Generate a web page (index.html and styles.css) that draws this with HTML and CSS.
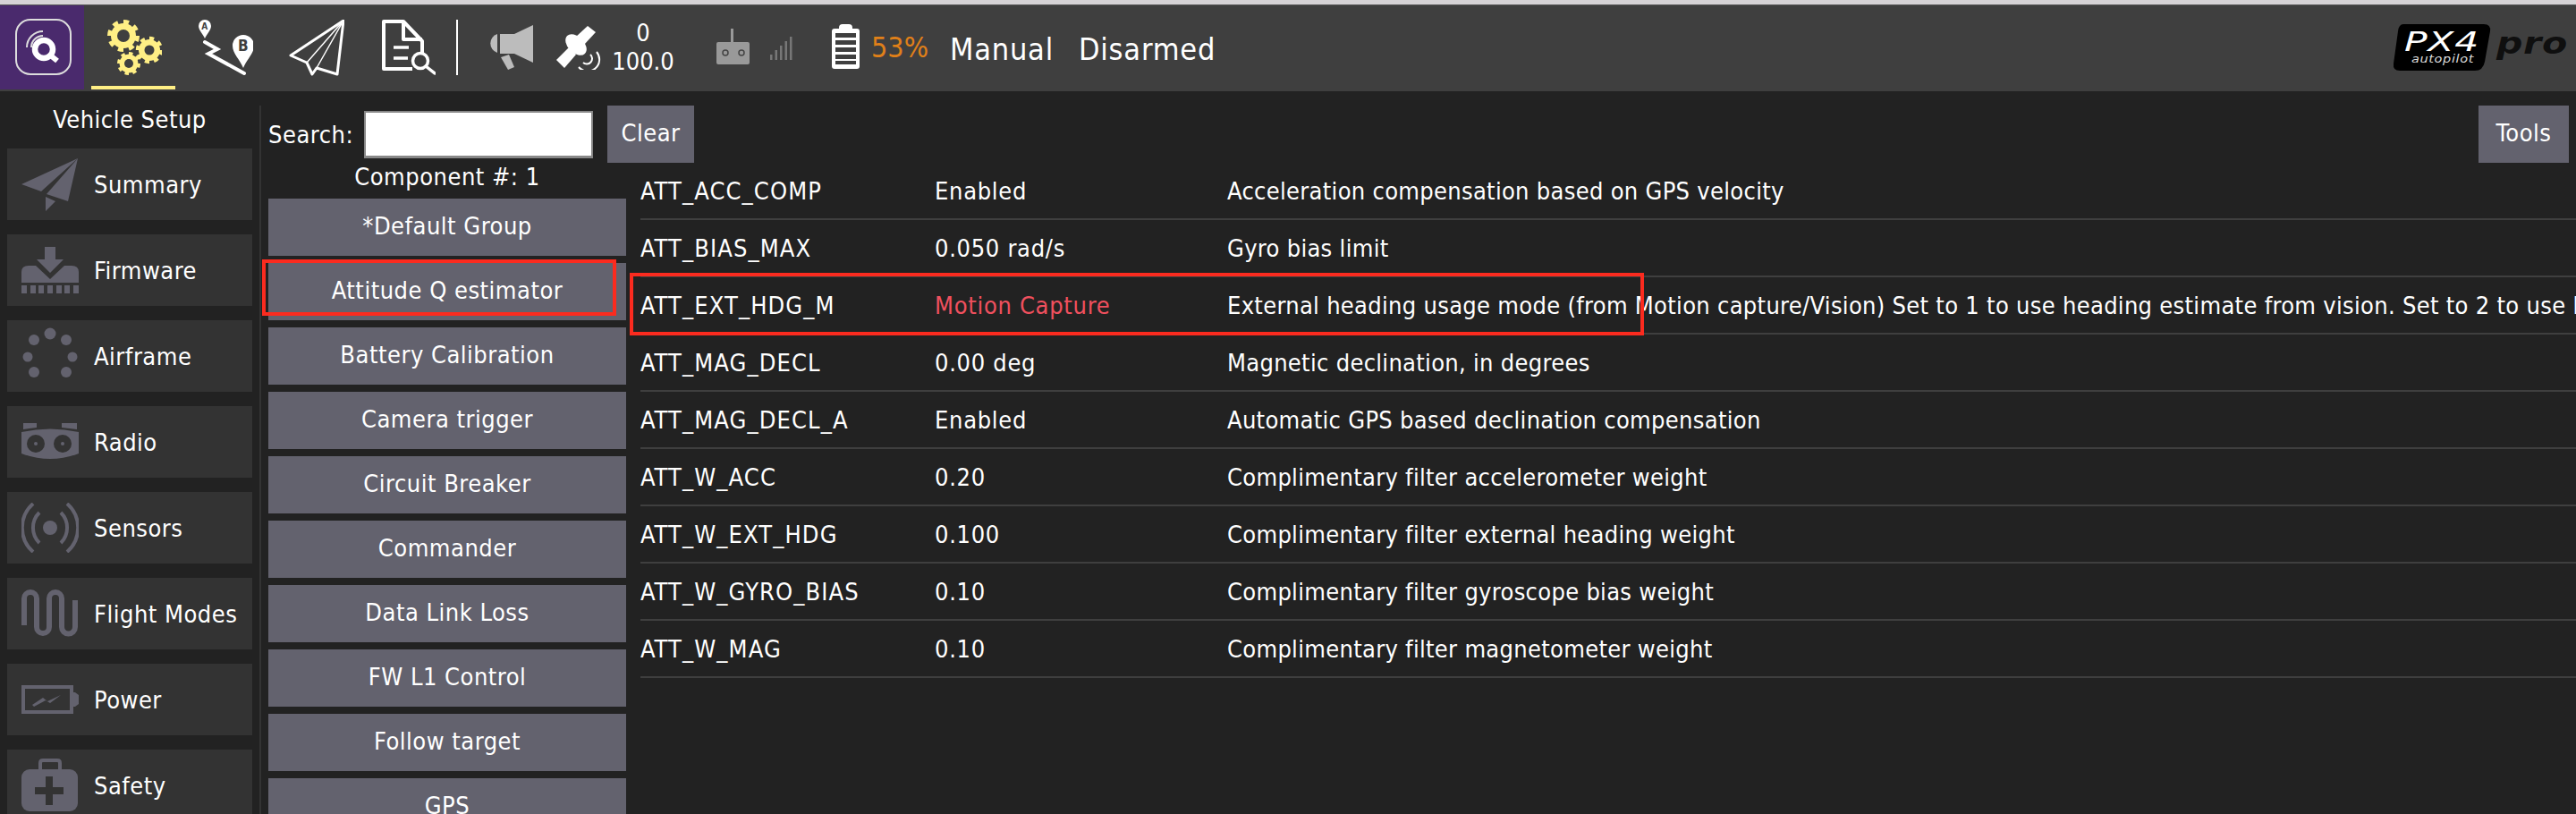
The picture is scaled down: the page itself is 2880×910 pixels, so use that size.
FILE: index.html
```html
<!DOCTYPE html>
<html lang="en">
<head>
    <meta charset="UTF-8">
    <title>QGroundControl</title>
    <link rel="stylesheet" href="styles.css">
</head>
<body>
    <div class="top-strip"></div>
    <div class="toolbar">
        <div class="logo-q">
            <svg width="64" height="64" viewBox="0 0 64 64">
                <rect x="1" y="1" width="61" height="61" rx="16" fill="none" stroke="#ddd" stroke-width="2"/>
                <circle cx="32" cy="34" r="10" fill="none" stroke="#fff" stroke-width="6.5"/>
                <path d="M37 39 L47 47" stroke="#fff" stroke-width="6" fill="none"/>
                <path d="M13 32 A18 18 0 0 1 31 14 M18 32 A13 13 0 0 1 31 19" stroke="#ddd" stroke-width="2" fill="none"/>
            </svg>
        </div>
        <div class="tool tool-active">
            <svg width="64" height="64" viewBox="0 0 64 64">
                <g fill="#ffef85">
                    <circle cx="21" cy="18" r="14"/>
                    <circle cx="50" cy="34" r="12"/>
                    <circle cx="27" cy="49" r="10.5"/>
                </g>
                <g fill="none" stroke="#ffef85">
                    <circle cx="21" cy="18" r="15.5" stroke-width="5" pathLength="16" stroke-dasharray="1 1"/>
                    <circle cx="50" cy="34" r="13" stroke-width="4.5" pathLength="16" stroke-dasharray="1 1"/>
                    <circle cx="27" cy="49" r="11" stroke-width="4" pathLength="16" stroke-dasharray="1 1"/>
                </g>
                <g fill="#3f3f3f">
                    <circle cx="21" cy="18" r="7"/>
                    <circle cx="50" cy="34" r="5.5"/>
                    <circle cx="27" cy="49" r="5"/>
                </g>
            </svg>
        </div>
        <div class="tool">
            <svg width="64" height="64" viewBox="0 0 64 64">
                <path d="M10 0 a7 7 0 0 1 7 7 c0 5 -5 9 -7 14 c-2 -5 -7 -9 -7 -14 a7 7 0 0 1 7 -7z" fill="#fff"/>
                <text x="10" y="11" class="pin-a">A</text>
                <path d="M53 17 a12 12 0 0 1 12 12 c0 9 -8 15 -12 25 c-4 -10 -12 -16 -12 -25 a12 12 0 0 1 12 -12z" fill="#fff"/>
                <text x="53" y="35" class="pin-b">B</text>
                <path d="M10 25 L24 33 L14 38 L54 60" fill="none" stroke="#fff" stroke-width="4" stroke-linecap="round"/>
            </svg>
        </div>
        <div class="tool">
            <svg width="64" height="64" viewBox="0 0 64 64">
                <path d="M63 1 L4 40 L22 48 L28 61 L33 54 L56 61 Z" fill="none" stroke="#fff" stroke-width="3" stroke-linejoin="round"/>
                <path d="M63 1 L22 48 M63 1 L33 54" fill="none" stroke="#fff" stroke-width="1.5"/>
            </svg>
        </div>
        <div class="tool">
            <svg width="64" height="64" viewBox="0 0 64 64">
                <path d="M38 55 H6 V2 H28 L49 24 V37 M28 2 V22 H49" fill="none" stroke="#fff" stroke-width="4" stroke-linejoin="round"/>
                <path d="M17 31 H34 M17 43 H33" fill="none" stroke="#fff" stroke-width="3.5"/>
                <circle cx="47" cy="46" r="8.5" fill="none" stroke="#fff" stroke-width="3.5"/>
                <path d="M53 52 L63 60" stroke="#fff" stroke-width="3.5" stroke-linecap="round"/>
            </svg>
        </div>
        <div class="tool-divider"></div>
        <svg class="ic-horn" width="52" height="50" viewBox="0 0 52 50" fill="#bcbcbc">
            <path d="M12 10 a11 11 0 0 0 0 21 z"/>
            <path d="M15 10 H31 L52 0 V42 L31 32 H15z"/>
            <path d="M16 36 L25 33 L31 47 L24 50z"/>
        </svg>
        <svg class="ic-sat" width="50" height="50" viewBox="0 0 50 50">
            <g fill="#fff">
                <path d="M35 1 L44 8 L31 22 L22 13z"/>
                <path d="M0 39 L14 25 L22 33 L9 48z"/>
                <ellipse cx="22" cy="22" rx="14" ry="9" transform="rotate(45 22 22)"/>
            </g>
            <path d="M45 30 a12 12 0 1 1 -20 17 M38 33 a6 6 0 1 1 -8 9" fill="none" stroke="#fff" stroke-width="2"/>
        </svg>
        <div class="sat-count">
            <div>0</div>
            <div>100.0</div>
        </div>
        <svg class="ic-rc" width="37" height="40" viewBox="0 0 37 40">
            <rect x="16" y="0" width="3" height="16" fill="#999"/>
            <rect x="0" y="15" width="37" height="25" rx="2" fill="#999"/>
            <circle cx="10" cy="27" r="3" fill="none" stroke="#444" stroke-width="1.5"/>
            <circle cx="28" cy="27" r="3" fill="none" stroke="#444" stroke-width="1.5"/>
        </svg>
        <svg class="ic-signal" width="25" height="26" viewBox="0 0 25 26" fill="#777">
            <rect x="0" y="20" width="2.5" height="6"/>
            <rect x="5.5" y="15" width="2.5" height="11"/>
            <rect x="11" y="10" width="2.5" height="16"/>
            <rect x="16.5" y="5" width="2.5" height="21"/>
            <rect x="22" y="0" width="2.5" height="26"/>
        </svg>
        <svg class="ic-batt" width="31" height="50" viewBox="0 0 31 50">
            <path d="M8 4 Q8 0 12 0 H19 Q23 0 23 4 V6 H8z" fill="#fff"/>
            <rect x="0" y="5" width="31" height="45" rx="3" fill="#fff"/>
            <g fill="#3f3f3f">
                <rect x="4" y="10" width="23" height="5"/>
                <rect x="4" y="18" width="23" height="5"/>
                <rect x="4" y="26" width="23" height="5"/>
                <rect x="4" y="34" width="23" height="5"/>
                <rect x="4" y="41" width="23" height="4"/>
            </g>
        </svg>
        <span class="batt-pct">53%</span>
        <span class="status status-mode">Manual</span>
        <span class="status status-arm">Disarmed</span>
        <div class="brand">
            <svg width="197" height="52" viewBox="0 0 197 52">
                <path d="M12 0 H102 Q110 0 109 8 L103 42 Q101 52 92 52 H8 Q0 52 1 44 L6 8 Q7 0 12 0z" fill="#000"/>
                <text x="55" y="30" class="px4-mark" textLength="84" lengthAdjust="spacingAndGlyphs">PX4</text>
                <text x="56" y="43" class="px4-sub" textLength="70" lengthAdjust="spacingAndGlyphs">autopilot</text>
                <text x="116" y="33" class="px4-pro" textLength="80" lengthAdjust="spacingAndGlyphs">pro</text>
            </svg>
        </div>
    </div>

    <div class="page">
        <div class="sidebar">
            <div class="sidebar-title">Vehicle Setup</div>
            <div class="side-btn">
                <svg class="side-icon" width="64" height="60" viewBox="0 0 64 60">
                    <path d="M63 1 L0 30 L22 38z M63 1 L28 41 L52 49z M27 44 L38 49 L27 60z"/>
                </svg>
                Summary
            </div>
            <div class="side-btn">
                <svg class="side-icon" width="64" height="52" viewBox="0 0 64 52">
                    <path d="M0 40 V28 Q0 21 8 21 H16 L32 36 L48 21 H56 Q64 21 64 28 V40z"/>
                    <path d="M26 0 H38 V14 H47 L32 29 L17 14 H26z"/>
                    <path d="M0 43h6v9h-6z M10 43h6v9h-6z M19 43h6v9h-6z M29 43h6v9h-6z M39 43h6v9h-6z M48 43h6v9h-6z M58 43h6v9h-6z"/>
                </svg>
                Firmware
            </div>
            <div class="side-btn">
                <svg class="side-icon" width="64" height="64" viewBox="0 0 64 64">
                    <circle cx="32" cy="7" r="6.5"/>
                    <circle cx="14" cy="14" r="6"/>
                    <circle cx="50" cy="14" r="6"/>
                    <circle cx="7" cy="33" r="5.5"/>
                    <circle cx="57" cy="33" r="5.5"/>
                    <circle cx="14" cy="50" r="6"/>
                    <circle cx="50" cy="50" r="6"/>
                </svg>
                Airframe
            </div>
            <div class="side-btn">
                <svg class="side-icon" width="64" height="42" viewBox="0 0 64 42">
                    <path d="M2 0 H17 V5 Q8 6 2 7z M62 0 H45 V5 Q54 6 62 7z"/>
                    <path d="M0 10 Q32 3 64 10 V34 Q32 46 0 34z"/>
                    <circle cx="16" cy="23" r="10" fill="#333"/>
                    <circle cx="46" cy="23" r="10" fill="#333"/>
                    <circle cx="16" cy="23" r="2"/>
                    <circle cx="46" cy="23" r="2"/>
                </svg>
                Radio
            </div>
            <div class="side-btn">
                <svg class="side-icon" width="64" height="56" viewBox="0 0 64 56">
                    <circle cx="32" cy="28" r="8"/>
                    <path d="M20 11 A24 24 0 0 0 20 45 M44 11 A24 24 0 0 1 44 45 M13 1 A36 36 0 0 0 13 55 M51 1 A36 36 0 0 1 51 55" fill="none" stroke="#63626e" stroke-width="4"/>
                </svg>
                Sensors
            </div>
            <div class="side-btn">
                <svg class="side-icon" width="64" height="54" viewBox="0 0 64 54">
                    <path d="M3 40 V10 A7 7 0 0 1 17 10 V42 A7 7 0 0 0 31 42 V10 A7 7 0 0 1 45 10 V42 A7.5 7.5 0 0 0 60 42 V12" fill="none" stroke="#63626e" stroke-width="6"/>
                </svg>
                Flight Modes
            </div>
            <div class="side-btn">
                <svg class="side-icon" width="64" height="32" viewBox="0 0 64 32">
                    <rect x="2" y="2" width="54" height="28" fill="none" stroke="#63626e" stroke-width="4"/>
                    <path d="M57 8 H60 L64 11 V21 L60 24 H57z"/>
                    <path d="M12 22 L24 14 L29 18 L44 11 L32 20 L27 17 L14 24z"/>
                </svg>
                Power
            </div>
            <div class="side-btn">
                <svg class="side-icon" width="64" height="60" viewBox="0 0 64 60">
                    <path d="M21 13 V5 Q21 2 24 2 H40 Q43 2 43 5 V13" fill="none" stroke="#63626e" stroke-width="4"/>
                    <rect x="0" y="12" width="63" height="47" rx="9"/>
                    <path d="M27 20 h8 v12 h12 v8 h-12 v12 h-8 v-12 h-12 v-8 h12z" fill="#333"/>
                </svg>
                Safety
            </div>
        </div>

        <div class="main">
            <div class="search-row">
                <label class="search-label" for="search">Search:</label>
                <input class="search-input" id="search" type="text">
                <div class="btn btn-clear">Clear</div>
                <div class="btn btn-tools">Tools</div>
            </div>
            <div class="content">
                <div class="groups">
                    <div class="comp-label">Component #: 1</div>
                    <div class="group-btn">*Default Group</div>
                    <div class="group-btn">Attitude Q estimator</div>
                    <div class="group-btn">Battery Calibration</div>
                    <div class="group-btn">Camera trigger</div>
                    <div class="group-btn">Circuit Breaker</div>
                    <div class="group-btn">Commander</div>
                    <div class="group-btn">Data Link Loss</div>
                    <div class="group-btn">FW L1 Control</div>
                    <div class="group-btn">Follow target</div>
                    <div class="group-btn">GPS</div>
                    <div class="mark mark-group"></div>
                </div>
                <div class="params">
                    <div class="param"><span class="p-name">ATT_ACC_COMP</span><span class="p-val">Enabled</span><span class="p-desc">Acceleration compensation based on GPS velocity</span></div>
                    <div class="param"><span class="p-name">ATT_BIAS_MAX</span><span class="p-val">0.050 rad/s</span><span class="p-desc">Gyro bias limit</span></div>
                    <div class="param"><span class="p-name">ATT_EXT_HDG_M</span><span class="p-val changed">Motion Capture</span><span class="p-desc">External heading usage mode (from Motion capture/Vision) Set to 1 to use heading estimate from vision. Set to 2 to use heading from motion capture</span></div>
                    <div class="param"><span class="p-name">ATT_MAG_DECL</span><span class="p-val">0.00 deg</span><span class="p-desc">Magnetic declination, in degrees</span></div>
                    <div class="param"><span class="p-name">ATT_MAG_DECL_A</span><span class="p-val">Enabled</span><span class="p-desc">Automatic GPS based declination compensation</span></div>
                    <div class="param"><span class="p-name">ATT_W_ACC</span><span class="p-val">0.20</span><span class="p-desc">Complimentary filter accelerometer weight</span></div>
                    <div class="param"><span class="p-name">ATT_W_EXT_HDG</span><span class="p-val">0.100</span><span class="p-desc">Complimentary filter external heading weight</span></div>
                    <div class="param"><span class="p-name">ATT_W_GYRO_BIAS</span><span class="p-val">0.10</span><span class="p-desc">Complimentary filter gyroscope bias weight</span></div>
                    <div class="param"><span class="p-name">ATT_W_MAG</span><span class="p-val">0.10</span><span class="p-desc">Complimentary filter magnetometer weight</span></div>
                    <div class="mark mark-param"></div>
                </div>
            </div>
        </div>
    </div>
</body>
</html>
```

FILE: styles.css
```css
body {
    margin: 0;
    height: 910px;
    overflow: hidden;
    background-color: #222;
    color: #fff;
    font-family: "DejaVu Sans", sans-serif;
    font-stretch: condensed;
    font-size: 27px;
    letter-spacing: 0.5px;
}
.top-strip {
    height: 5px;
    background-color: #d6d3d6;
    border-bottom: 1px solid #555;
}
.toolbar {
    height: 96px;
    background-color: #3f3f3f;
    display: flex;
    align-items: flex-start;
}
.logo-q {
    width: 94px;
    height: 94px;
    background-color: #4a2a6d;
    padding: 15px 0 0 17px;
    box-sizing: border-box;
}
.tool {
    width: 94px;
    height: 94px;
    margin-left: 8px;
    padding-top: 16px;
    box-sizing: border-box;
    display: flex;
    justify-content: center;
}
.tool-active {
    border-bottom: 4px solid #ffef85;
}
.tool-divider {
    width: 2px;
    height: 62px;
    margin: 16px 0 0 8px;
    background-color: #fff;
}
.ic-horn {
    margin: 22px 0 0 32px;
}
.ic-sat {
    margin: 22px 0 0 26px;
}
.sat-count {
    width: 70px;
    margin: 15px 0 0 12px;
    text-align: center;
    line-height: 32px;
    letter-spacing: 0;
}
.ic-rc {
    margin: 26px 0 0 47px;
}
.ic-signal {
    margin: 35px 0 0 23px;
}
.ic-batt {
    margin: 21px 0 0 44px;
}
.batt-pct {
    margin: 28px 0 0 13px;
    font-size: 32px;
    letter-spacing: 0;
    color: #e08019;
}
.status {
    margin-top: 29px;
    font-size: 34px;
    letter-spacing: 0.8px;
}
.status-mode {
    margin-left: 24px;
}
.status-arm {
    margin-left: 28px;
}
.brand {
    margin: 21px 8px 0 auto;
}
.pin-a, .pin-b {
    fill: #3f3f3f;
    font-weight: bold;
    text-anchor: middle;
}
.pin-a {
    font-size: 10px;
}
.pin-b {
    font-size: 17px;
}
.px4-mark {
    fill: #fff;
    font-size: 30px;
    font-style: italic;
    text-anchor: middle;
}
.px4-sub {
    fill: #ddd;
    font-size: 13px;
    font-style: italic;
    text-anchor: middle;
}
.px4-pro {
    fill: #0f0f0f;
    font-size: 34px;
    font-weight: bold;
    font-style: italic;
}

.page {
    display: flex;
    height: 808px;
}
.sidebar {
    width: 290px;
    flex-shrink: 0;
    padding: 16px 8px 0;
    box-sizing: border-box;
}
.sidebar-title {
    height: 48px;
    line-height: 32px;
    text-align: center;
}
.side-btn {
    height: 80px;
    margin-bottom: 16px;
    padding-left: 16px;
    background-color: #333;
    display: flex;
    align-items: center;
}
.side-icon {
    fill: #63626e;
    width: 64px;
    margin-right: 17px;
    flex-shrink: 0;
}
.main {
    flex: 1;
    min-width: 0;
    margin-top: 16px;
    padding-left: 8px;
    border-left: 2px solid #333;
}
.search-row {
    display: flex;
    align-items: center;
    height: 64px;
    padding-right: 8px;
}
.search-label {
    width: 107px;
}
.search-input {
    width: 256px;
    height: 53px;
    box-sizing: border-box;
    background: #fff;
    border: 2px solid #888;
    border-bottom-width: 3px;
    padding: 0;
}
.btn {
    height: 64px;
    line-height: 62px;
    background-color: #63626e;
    text-align: center;
}
.btn-clear {
    width: 97px;
    margin-left: 16px;
}
.btn-tools {
    width: 101px;
    margin-left: auto;
}
.content {
    display: flex;
    gap: 16px;
}
.groups {
    width: 400px;
    flex-shrink: 0;
    position: relative;
}
.comp-label {
    height: 40px;
    line-height: 32px;
    text-align: center;
}
.group-btn {
    height: 64px;
    line-height: 62px;
    margin-bottom: 8px;
    background-color: #63626e;
    text-align: center;
}
.params {
    flex: 1;
    min-width: 0;
    position: relative;
}
.param {
    display: grid;
    grid-template-columns: 329px 327px 1fr;
    height: 64px;
    padding-top: 1px;
    line-height: 61px;
    box-sizing: border-box;
    border-bottom: 2px solid #3f3f3f;
    white-space: nowrap;
    overflow: hidden;
}
.p-name {
    letter-spacing: 1.1px;
}
.p-val {
    letter-spacing: 0.7px;
}
.p-desc {
    letter-spacing: 0.3px;
}
.changed {
    color: #f0505e;
}
.mark {
    position: absolute;
    box-sizing: border-box;
    border: 4px solid #fb2b1f;
}
.mark-group {
    left: -7px;
    top: 108px;
    width: 396px;
    height: 63px;
}
.mark-param {
    left: -12px;
    top: 123px;
    width: 1134px;
    height: 70px;
}
```
